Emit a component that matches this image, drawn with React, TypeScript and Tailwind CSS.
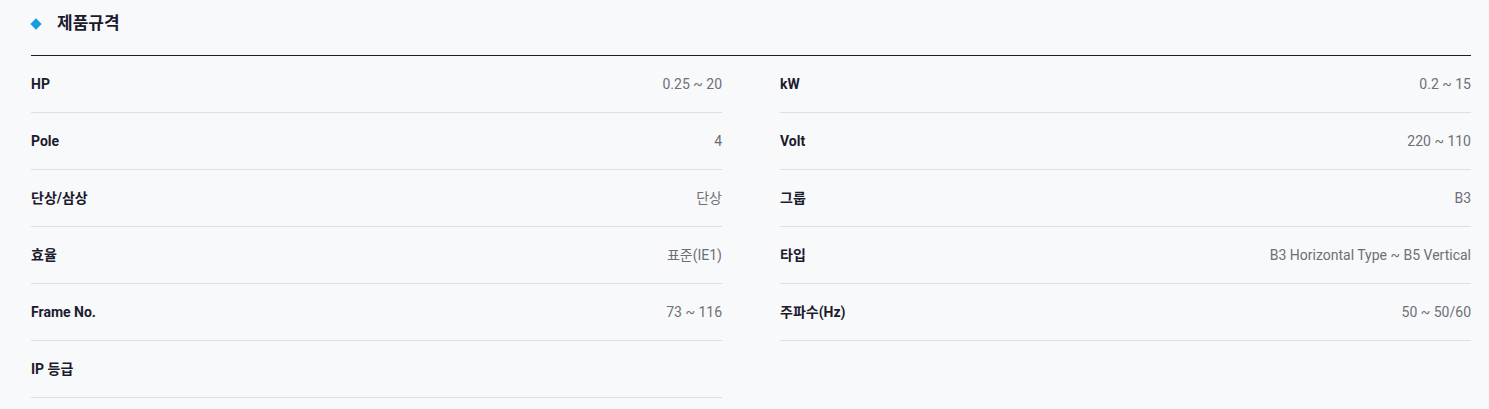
import React from 'react';

type Spec = { label: string; value: string };

const left: Spec[] = [
  { label: 'HP', value: '0.25 ~ 20' },
  { label: 'Pole', value: '4' },
  { label: '단상/삼상', value: '단상' },
  { label: '효율', value: '표준(IE1)' },
  { label: 'Frame No.', value: '73 ~ 116' },
  { label: 'IP 등급', value: '' },
];

const right: Spec[] = [
  { label: 'kW', value: '0.2 ~ 15' },
  { label: 'Volt', value: '220 ~ 110' },
  { label: '그룹', value: 'B3' },
  { label: '타입', value: 'B3 Horizontal Type ~ B5 Vertical' },
  { label: '주파수(Hz)', value: '50 ~ 50/60' },
];

const SpecRow: React.FC<{ spec: Spec }> = ({ spec }) => (
  <div className="flex h-[57px] items-center justify-between border-b border-[#dedfe3]">
    <span className="text-[14px] font-bold text-[#1c1b2e]">{spec.label}</span>
    <span className="text-[14px] text-[#6e6f76]">{spec.value}</span>
  </div>
);

const App: React.FC = () => {
  return (
    <div
      className="min-h-[409px] w-full bg-[#f8f9fb] pl-[31px]"
      style={{ fontFamily: 'Roboto, "Noto Sans CJK KR", sans-serif' }}
    >
      <div className="w-[1440px]">
        <div className="flex h-[55px] items-start pt-[12px]">
          <div className="flex h-[24px] items-center gap-[17px]">
            <span className="ml-[1px] block h-[8px] w-[8px] rotate-45 bg-[#169ee0]" />
            <h2 className="text-[17px] font-bold text-[#1c1b2e]">제품규격</h2>
          </div>
        </div>
        <div className="flex gap-[58px] border-t border-[#1f1f24]">
          <div className="flex-1">
            {left.map((s) => (
              <SpecRow key={s.label} spec={s} />
            ))}
          </div>
          <div className="flex-1">
            {right.map((s) => (
              <SpecRow key={s.label} spec={s} />
            ))}
          </div>
        </div>
      </div>
    </div>
  );
};

export default App;
